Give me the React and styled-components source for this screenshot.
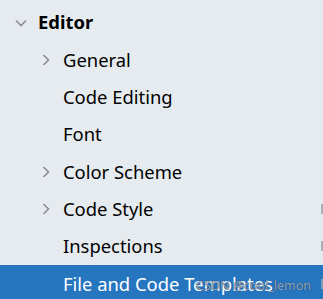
import React from 'react';
import styled, {createGlobalStyle} from 'styled-components';

const Global = createGlobalStyle`
  html, body {
    margin: 0;
    padding: 0;
    background: #e6ebf0;
  }
  body {
    font-family: "Noto Sans", "Liberation Sans", sans-serif;
  }
`;

const Tree = styled.div`
  width: 323px;
  height: 299px;
  overflow: hidden;
  padding-top: 4px;
  box-sizing: border-box;
  background: #e6ebf0;
`;

const Row = styled.div`
  position: relative;
  display: flex;
  align-items: center;
  height: 37.3px;
  padding-left: ${p => 13 + p.level * 25}px;
  background: ${p => (p.selected ? '#2675bf' : 'transparent')};
  color: ${p => (p.selected ? '#ffffff' : '#000000')};
`;

const Arrow = styled.span`
  display: flex;
  align-items: center;
  justify-content: center;
  width: 16px;
  height: 16px;
  flex-shrink: 0;
  margin-right: 9px;
`;

const Label = styled.span`
  font-size: 18.4px;
  font-weight: ${p => (p.bold ? 700 : 400)};
  white-space: nowrap;
  line-height: 1;
`;

const EdgeMark = styled.span`
  margin-left: auto;
  width: 2px;
  height: 10px;
  background: ${p => (p.selected ? '#7f9cbb' : '#a9b1ba')};
`;

const Watermark = styled.span`
  position: absolute;
  left: 196px;
  top: 12px;
  font-size: 12.5px;
  color: rgba(160, 168, 180, 0.95);
  text-shadow: 0 0 1px rgba(30, 50, 80, 0.8);
  white-space: nowrap;
  pointer-events: none;
`;

const Chevron = ({open}) => (
    open ? (
        <svg width="12" height="8" viewBox="0 0 12 8">
            <path d="M1 1.5 L6 6.5 L11 1.5" fill="none" stroke="#8a8e93" strokeWidth="1.6"/>
        </svg>
    ) : (
        <svg width="8" height="12" viewBox="0 0 8 12">
            <path d="M1.5 1 L6.5 6 L1.5 11" fill="none" stroke="#8a8e93" strokeWidth="1.6"/>
        </svg>
    )
);

const items = [
    {label: 'Editor', level: 0, arrow: 'open', bold: true},
    {label: 'General', level: 1, arrow: 'closed'},
    {label: 'Code Editing', level: 1},
    {label: 'Font', level: 1},
    {label: 'Color Scheme', level: 1, arrow: 'closed'},
    {label: 'Code Style', level: 1, arrow: 'closed', mark: true},
    {label: 'Inspections', level: 1, mark: true},
    {label: 'File and Code Templates', level: 1, mark: true, selected: true},
];

export default function App() {
    return (
        <>
            <Global/>
            <Tree>
                {items.map((it, i) => (
                    <Row key={i} level={it.level} selected={it.selected}>
                        <Arrow>
                            {it.arrow && <Chevron open={it.arrow === 'open'}/>}
                        </Arrow>
                        <Label bold={it.bold}>{it.label}</Label>
                        {it.mark && <EdgeMark selected={it.selected}/>}
                        {it.selected && <Watermark>CSDN @cool_lemon</Watermark>}
                    </Row>
                ))}
            </Tree>
        </>
    );
}
